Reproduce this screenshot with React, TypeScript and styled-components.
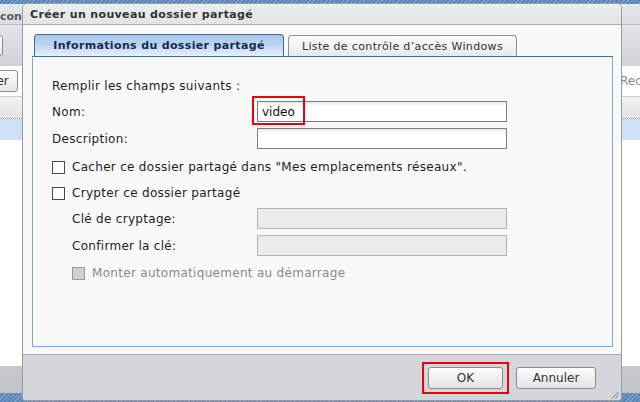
import styled, { createGlobalStyle } from "styled-components";

const GlobalStyle = createGlobalStyle`
  html, body {
    margin: 0;
    padding: 0;
    width: 640px;
    height: 402px;
    overflow: hidden;
    font-family: "DejaVu Sans", Verdana, sans-serif;
    font-size: 11px;
  }
  * { box-sizing: border-box; }
`;

const Desktop = styled.div`
  position: relative;
  width: 640px;
  height: 402px;
  overflow: hidden;
  padding-top: 4px;
  background-color: #5a86ba;
  background-image: repeating-linear-gradient(
    135deg,
    rgba(255, 255, 255, 0.22) 0 1px,
    transparent 1px 3px
  );
`;

/* window behind the dialog */
const BgWindow = styled.div`
  margin-left: -40px;
  width: 720px;
  height: 389px;
  display: flex;
  flex-direction: column;
  background: #fff;
  border-radius: 4px 4px 0 0;
  overflow: hidden;
`;

const BgTitle = styled.div`
  height: 21px;
  padding: 4px 0 0 40px;
  display: flex;
  align-items: center;
  font-weight: bold;
  color: #5a5a5a;
  background: linear-gradient(#e6e8eb, #d9dde1);
  border-bottom: 1px solid #b9bdc2;
`;

const BgToolbar = styled.div`
  height: 41px;
  display: flex;
  align-items: center;
  padding: 0 5px;
  background: linear-gradient(#e2e5e8, #cfd3d7);
`;

const BgToolButton = styled.div`
  width: 38px;
  height: 21px;
  border: 1px solid #8e8e8e;
  border-radius: 3px;
  background: linear-gradient(#fff, #e6e6e6);
`;

const BgSubBar = styled.div`
  height: 31px;
  display: flex;
  align-items: center;
  justify-content: space-between;
  padding: 0 0 0 7px;
  border-bottom: 1px solid #cfcfcf;
`;

const BgButton = styled.div`
  height: 22px;
  padding: 0 8px;
  display: flex;
  align-items: center;
  border: 1px solid #8e8e8e;
  border-radius: 3px;
  color: #333;
  font-size: 12px;
  background: linear-gradient(#fff, #e6e6e6);
`;

const BgSearch = styled.div`
  width: 60px;
  color: #8a8a8a;
  font-size: 12px;
  white-space: nowrap;
  overflow: hidden;
`;

const GridHeader = styled.div`
  height: 21px;
  background: linear-gradient(#f3f3f3, #e3e3e3);
`;

const SelectedRow = styled.div`
  height: 22px;
  border-top: 1px dotted #9aa3ad;
  background: #cfe0f4;
`;

const GridFill = styled.div`
  flex: 1;
  background: #fff;
`;

const StatusBar = styled.div`
  height: 27px;
  background: linear-gradient(#c6cacf, #c0c4c9);
`;

/* dialog */
const Dialog = styled.div`
  position: absolute;
  left: 22px;
  top: 3px;
  width: 600px;
  height: 398px;
  display: flex;
  flex-direction: column;
  border: 1px solid #9a9ca0;
  border-radius: 5px 5px 4px 4px;
  overflow: hidden;
  background: #f9f9f9;
`;

const DialogTitle = styled.div`
  height: 21px;
  padding-left: 7px;
  display: flex;
  align-items: center;
  font-weight: bold;
  font-size: 11px;
  letter-spacing: 0.35px;
  color: #333;
  background: linear-gradient(#eceef0, #e2e5e8);
  border-bottom: 1px solid #a9adb2;
`;

const DialogBody = styled.div`
  flex: 1;
  display: flex;
  flex-direction: column;
  padding: 9px 8px 7px 9px;
  background: #f9f9f9;
`;

const TabRow = styled.div`
  display: flex;
  align-items: flex-end;
  gap: 4px;
  padding-left: 2px;
  height: 22px;
`;

const Tab = styled.div<{ $active?: boolean }>`
  height: ${({ $active }) => ($active ? "22px" : "21px")};
  width: ${({ $active }) => ($active ? "250px" : "229px")};
  display: flex;
  align-items: center;
  justify-content: center;
  letter-spacing: 0.35px;
  border: 1px solid ${({ $active }) => ($active ? "#3b6a9c" : "#8c8f93")};
  border-bottom: none;
  border-radius: 4px 4px 0 0;
  font-weight: ${({ $active }) => ($active ? "bold" : "normal")};
  color: ${({ $active }) => ($active ? "#142b52" : "#333")};
  background: ${({ $active }) =>
    $active
      ? "linear-gradient(#a9c9ea 0%, #b9d4ef 45%, #e6f0fa 100%)"
      : "linear-gradient(#fdfdfd, #e6e9ec)"};
`;

const Panel = styled.div`
  flex: 1;
  border: 1px solid #7ba8d6;
  border-top-color: #3f6e9e;
  background: #f9f9f9;
  padding: 21px 0 0 19px;
  display: flex;
  flex-direction: column;
  font-size: 12px;
  letter-spacing: 0.3px;
`;

const Line = styled.div<{ $top: number; $indent?: boolean; $h?: number }>`
  margin-top: ${({ $top }) => $top}px;
  padding-left: ${({ $indent }) => ($indent ? "20px" : "0")};
  height: ${({ $h }) => $h ?? 16}px;
  display: flex;
  align-items: center;
  color: #1e1e1e;
  white-space: nowrap;
`;

const Label = styled.div<{ $w: number }>`
  width: ${({ $w }) => $w}px;
`;

const FieldWrap = styled.div`
  position: relative;
`;

const Input = styled.div<{ $disabled?: boolean }>`
  width: 250px;
  height: 21px;
  padding-left: 4px;
  display: flex;
  align-items: center;
  font-size: 12px;
  letter-spacing: 0;
  color: #111;
  border: 1px solid ${({ $disabled }) => ($disabled ? "#b3b3b3" : "#7d7d7d")};
  background: ${({ $disabled }) =>
    $disabled ? "#ebebeb" : "linear-gradient(#e9e9e9 0, #fff 4px)"};
`;

const Highlight = styled.div<{ $l: number; $t: number; $w: number; $h: number }>`
  position: absolute;
  left: ${({ $l }) => $l}px;
  top: ${({ $t }) => $t}px;
  width: ${({ $w }) => $w}px;
  height: ${({ $h }) => $h}px;
  border: 2px solid #e8000b;
  pointer-events: none;
`;

const Check = styled.span<{ $disabled?: boolean }>`
  width: 13px;
  height: 13px;
  margin-right: 7px;
  flex: none;
  border: 1px solid ${({ $disabled }) => ($disabled ? "#9c9a96" : "#4a4a4a")};
  background: ${({ $disabled }) => ($disabled ? "#d4d0c8" : "#fff")};
`;

const Muted = styled.span`
  color: #8a8a8a;
`;

const Footer = styled.div`
  position: relative;
  height: 46px;
  display: flex;
  align-items: center;
  justify-content: flex-end;
  gap: 7px;
  padding: 0 25px 0 0;
  border-top: 1px solid #a9adb1;
  background: #d3d7db;
`;

const OkFrame = styled.div`
  border: 2px solid #e8000b;
  padding: 3px 4px;
`;

const Button = styled.div<{ $w: number }>`
  width: ${({ $w }) => $w}px;
  height: 22px;
  display: flex;
  align-items: center;
  justify-content: center;
  font-size: 12px;
  color: #333;
  border: 1px solid #8a8a8a;
  border-radius: 3px;
  background: linear-gradient(#fdfdfd, #e2e3e5);
`;

const Grip = styled.svg`
  position: absolute;
  right: 2px;
  bottom: 1px;
`;

export default function App() {
  return (
    <>
      <GlobalStyle />
      <Desktop>
        <BgWindow>
          <BgTitle>con</BgTitle>
          <BgToolbar>
            <BgToolButton />
          </BgToolbar>
          <BgSubBar>
            <BgButton>Créer</BgButton>
            <BgSearch>Rechercher</BgSearch>
          </BgSubBar>
          <GridHeader />
          <SelectedRow />
          <GridFill />
          <StatusBar />
        </BgWindow>

        <Dialog>
          <DialogTitle>Créer un nouveau dossier partagé</DialogTitle>
          <DialogBody>
            <TabRow>
              <Tab $active>Informations du dossier partagé</Tab>
              <Tab>Liste de contrôle d’accès Windows</Tab>
            </TabRow>
            <Panel>
              <Line $top={0}>Remplir les champs suivants :</Line>
              <Line $top={7} $h={21}>
                <Label $w={205}>Nom:</Label>
                <FieldWrap>
                  <Input>video</Input>
                  <Highlight $l={-5} $t={-5} $w={53} $h={29} />
                </FieldWrap>
              </Line>
              <Line $top={6} $h={21}>
                <Label $w={205}>Description:</Label>
                <Input />
              </Line>
              <Line $top={10}>
                <Check />
                Cacher ce dossier partagé dans "Mes emplacements réseaux".
              </Line>
              <Line $top={10}>
                <Check />
                Crypter ce dossier partagé
              </Line>
              <Line $top={7} $h={21} $indent>
                <Label $w={185}>Clé de cryptage:</Label>
                <Input $disabled />
              </Line>
              <Line $top={6} $h={21} $indent>
                <Label $w={185}>Confirmer la clé:</Label>
                <Input $disabled />
              </Line>
              <Line $top={9} $indent>
                <Check $disabled />
                <Muted>Monter automatiquement au démarrage</Muted>
              </Line>
            </Panel>
          </DialogBody>
          <Footer>
            <OkFrame>
              <Button $w={75}>OK</Button>
            </OkFrame>
            <Button $w={80}>Annuler</Button>
            <Grip width="8" height="8" viewBox="0 0 8 8">
              <path d="M1 7.5 L7.5 1 M4.5 7.5 L7.5 4.5" stroke="#7a7d80" strokeWidth="1" />
            </Grip>
          </Footer>
        </Dialog>
      </Desktop>
    </>
  );
}
